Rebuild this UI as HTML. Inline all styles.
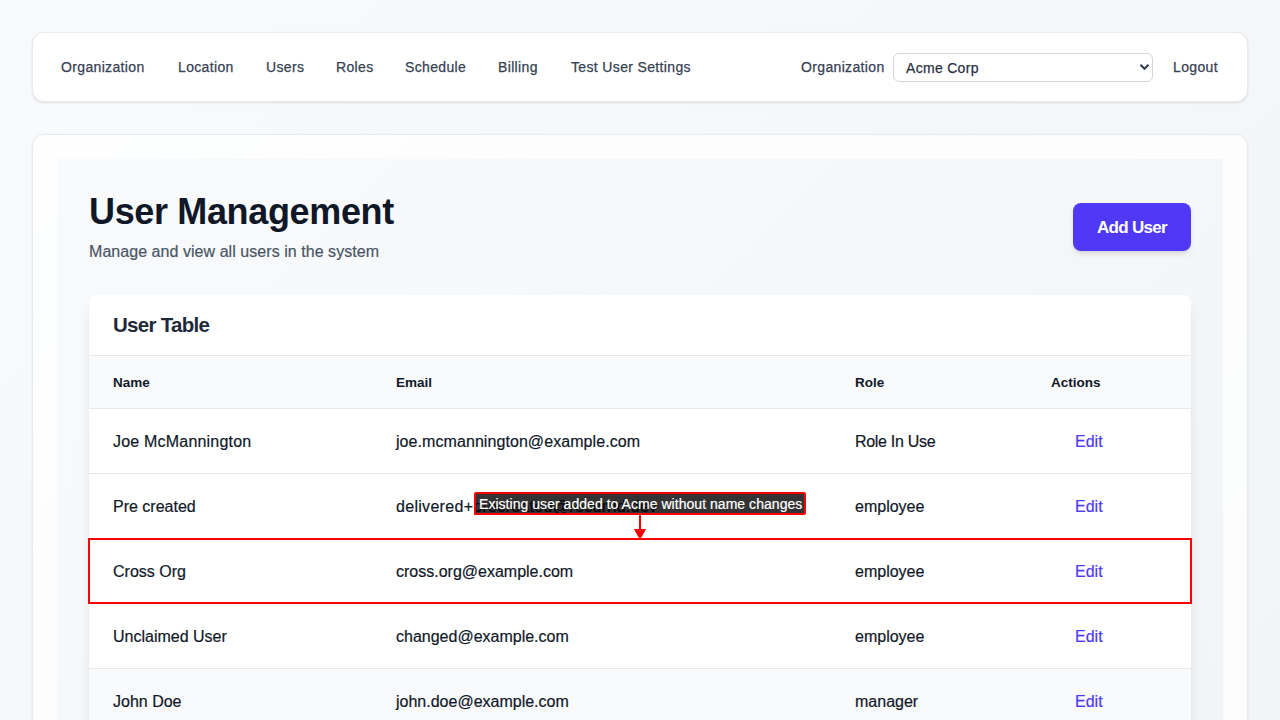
<!DOCTYPE html>
<html>
<head>
<meta charset="utf-8">
<style>
*{box-sizing:border-box;margin:0;padding:0}
html,body{width:1280px;height:720px;overflow:hidden}
body{font-family:"Liberation Sans",sans-serif;background:linear-gradient(135deg,#f9fafb 0%,#f3f4f6 100%);position:relative;color:#101828}
.abs{position:absolute;white-space:nowrap}
.nav{position:absolute;left:32px;top:32px;width:1216px;height:70px;background:#fff;border:1px solid #e8eaee;border-radius:12px;box-shadow:0 1px 3px rgba(0,0,0,.08),0 1px 2px rgba(0,0,0,.04)}
.nl{position:absolute;top:58px;font-size:14px;line-height:18px;color:#364153;white-space:nowrap;letter-spacing:.35px;-webkit-text-stroke:.25px #364153}
.sel{position:absolute;left:893px;top:53px;width:260px;height:29px;border:1px solid #d1d5dc;border-radius:6px;background:#fff}
.main{position:absolute;left:32px;top:134px;width:1216px;height:700px;background:rgba(255,255,255,.75);border:1px solid #e8eaee;border-radius:12px;box-shadow:0 1px 3px rgba(0,0,0,.08)}
.inner{position:absolute;left:57px;top:159px;width:1166px;height:600px;background:linear-gradient(135deg,#f9fafb 0%,#f3f4f6 100%)}
h1{position:absolute;left:89px;top:190px;font-size:36px;line-height:44px;font-weight:bold;color:#101828;white-space:nowrap;letter-spacing:-.35px}
.sub{position:absolute;left:89px;top:242px;font-size:16px;line-height:20px;color:#4a5565;white-space:nowrap;letter-spacing:.05px;-webkit-text-stroke:.2px #4a5565}
.btn{position:absolute;left:1073px;top:203px;width:118px;height:48px;background:#4f39f6;border-radius:8px;color:#fff;font-weight:bold;font-size:17px;line-height:50px;text-align:center;letter-spacing:-.7px;box-shadow:0 4px 6px -1px rgba(0,0,0,.1),0 2px 4px -2px rgba(0,0,0,.1)}
.card{position:absolute;left:89px;top:295px;width:1102px;height:600px;background:#fff;border-radius:8px;box-shadow:0 10px 15px -3px rgba(0,0,0,.1),0 4px 6px -4px rgba(0,0,0,.1)}
.ct{position:absolute;left:113px;top:313px;font-size:20.5px;line-height:24px;font-weight:bold;color:#1e2939;white-space:nowrap;letter-spacing:-.7px}
.thead{position:absolute;left:89px;top:355px;width:1102px;height:54px;background:#f9fafb;border-top:1px solid #e5e7eb;border-bottom:1px solid #e5e7eb}
.th{position:absolute;top:375px;font-size:13.5px;line-height:16px;font-weight:bold;color:#101828;white-space:nowrap}
.row{position:absolute;left:89px;width:1102px;height:65px;border-bottom:1px solid #e5e7eb}
.td{position:absolute;font-size:16px;line-height:20px;color:#101828;white-space:nowrap;-webkit-text-stroke:.2px currentColor}
.edit{color:#4f39f6}
</style>
</head>
<body>
<div class="nav"></div>
<span class="nl" style="left:61px">Organization</span>
<span class="nl" style="left:178px">Location</span>
<span class="nl" style="left:266px">Users</span>
<span class="nl" style="left:336px">Roles</span>
<span class="nl" style="left:405px">Schedule</span>
<span class="nl" style="left:498px">Billing</span>
<span class="nl" style="left:571px">Test User Settings</span>
<span class="nl" style="left:801px">Organization</span>
<div class="sel"></div>
<span class="nl" style="left:906px;top:59px;color:#1e2939;letter-spacing:.3px">Acme Corp</span>
<svg class="abs" style="left:1139px;top:63px" width="11" height="8" viewBox="0 0 11 8"><path d="M1.5 1.8 L5.5 5.8 L9.5 1.8" fill="none" stroke="#364153" stroke-width="2.2"/></svg>
<span class="nl" style="left:1173px">Logout</span>

<div class="main"></div>
<div class="inner"></div>
<h1>User Management</h1>
<div class="sub">Manage and view all users in the system</div>
<div class="btn">Add User</div>

<div class="card"></div>
<div class="ct">User Table</div>
<div class="thead"></div>
<span class="th" style="left:113px">Name</span>
<span class="th" style="left:396px">Email</span>
<span class="th" style="left:855px">Role</span>
<span class="th" style="left:1051px">Actions</span>

<div class="row" style="top:409px"></div>
<div class="row" style="top:474px"></div>
<div class="row" style="top:539px"></div>
<div class="row" style="top:604px"></div>
<div class="row" style="top:669px;background:#f9fafb"></div>

<span class="td" style="left:113px;top:432px;letter-spacing:.2px">Joe McMannington</span>
<span class="td" style="left:396px;top:432px;letter-spacing:.07px">joe.mcmannington@example.com</span>
<span class="td" style="left:855px;top:432px;letter-spacing:-.3px">Role In Use</span>
<span class="td edit" style="left:1075px;top:432px">Edit</span>

<span class="td" style="left:113px;top:497px">Pre created</span>
<span class="td" style="left:396px;top:497px;letter-spacing:.3px">delivered+precreated@recurrid.dev</span>
<span class="td" style="left:855px;top:497px">employee</span>
<span class="td edit" style="left:1075px;top:497px">Edit</span>

<span class="td" style="left:113px;top:562px">Cross Org</span>
<span class="td" style="left:396px;top:562px">cross.org@example.com</span>
<span class="td" style="left:855px;top:562px">employee</span>
<span class="td edit" style="left:1075px;top:562px">Edit</span>

<span class="td" style="left:113px;top:627px">Unclaimed User</span>
<span class="td" style="left:396px;top:627px">changed@example.com</span>
<span class="td" style="left:855px;top:627px">employee</span>
<span class="td edit" style="left:1075px;top:627px">Edit</span>

<span class="td" style="left:113px;top:692px">John Doe</span>
<span class="td" style="left:396px;top:692px">john.doe@example.com</span>
<span class="td" style="left:855px;top:692px">manager</span>
<span class="td edit" style="left:1075px;top:692px">Edit</span>

<!-- annotation -->
<div class="abs" style="left:88px;top:538px;width:1104px;height:66px;border:2px solid #ff0000"></div>
<div class="abs" style="left:474px;top:492px;width:332px;height:23px;border:2px solid #ff0000;border-radius:2px;background:rgba(0,0,0,.8);color:#fff;font-size:14px;line-height:21px;padding-left:3px;letter-spacing:.04px;-webkit-text-stroke:.2px #fff">Existing user added to Acme without name changes</div>
<div class="abs" style="left:639px;top:515px;width:2px;height:14px;background:#ff0000"></div>
<svg class="abs" style="left:634px;top:529px" width="12" height="11" viewBox="0 0 12 11"><path d="M0 0 L12 0 L6 11 Z" fill="#ff0000"/></svg>
</body>
</html>
